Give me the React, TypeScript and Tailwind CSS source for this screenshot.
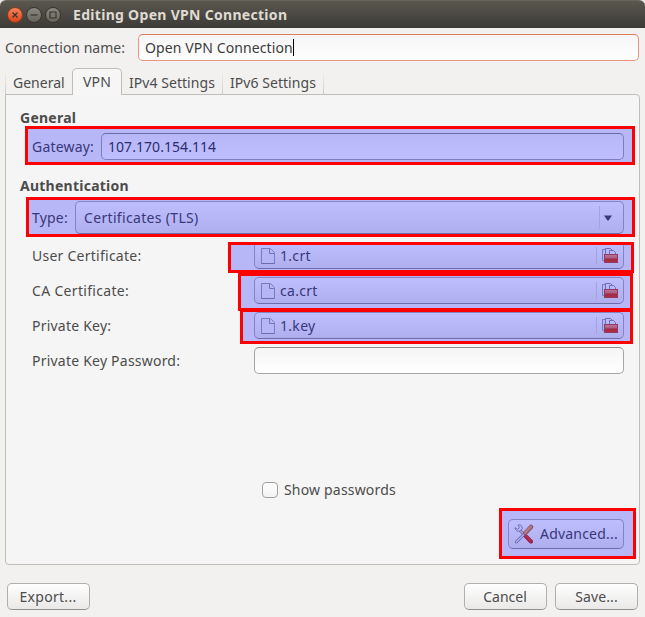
import type { ReactNode } from "react";

const FIELD =
  "border border-[#a9a6a2] border-t-[#918f8b] rounded-[5px] bg-linear-to-b from-[#f5f5f5] to-white";
const BUTTON =
  "border border-[#b2afab] border-b-[#93918e] rounded-[5px] bg-linear-to-b from-[#fefefe] to-[#eae9e8]";

function Highlight({ className }: { className: string }) {
  return (
    <div
      className={`absolute border-[3px] border-[#ff0000] bg-[#0000ff]/25 bg-clip-padding pointer-events-none ${className}`}
    />
  );
}

function PageIcon() {
  return (
    <svg width="14" height="16" viewBox="0 0 14 16" fill="none" className="shrink-0">
      <path d="M.5.5h9l4 4v11H.5z" fill="#f3f3f5" stroke="#a3a3aa" />
      <path d="M.5 15.500h13" stroke="#8f8f98" />
      <path d="M8.500 1v4.500H13" stroke="#9a9aa2" />
    </svg>
  );
}

function FolderIcon() {
  return (
    <svg width="16" height="16" viewBox="0 0 16 16" fill="none" className="shrink-0">
      <defs>
        <linearGradient id="folder" x1="0" y1="0" x2="0" y2="1">
          <stop offset="0" stopColor="#f0a080" />
          <stop offset=".45" stopColor="#e67a50" />
          <stop offset=".55" stopColor="#d83a08" />
          <stop offset="1" stopColor="#e83c0c" />
        </linearGradient>
      </defs>
      <path d="M.5 12.500v-11h4v11z" fill="#eeeef2" stroke="#a2a2ac" />
      <path d="M3.500 9.500V.5h5l2 2v7z" fill="#f4f4f8" stroke="#9393a0" />
      <path d="M7.500 7.500v-5h4l2 2v3z" fill="#f4f4f8" stroke="#9393a0" />
      <rect x="2.500" y="6.500" width="13" height="8" fill="url(#folder)" stroke="#c84c28" />
    </svg>
  );
}

function ToolsIcon() {
  return (
    <svg width="20" height="20" viewBox="0 0 20 20" fill="none" className="shrink-0">
      <path d="M6 6.500l6 6" stroke="#83838c" strokeWidth="2.800" />
      <path d="M6 6.500l6 6" stroke="#e4e4ea" strokeWidth="1.300" />
      <path d="M11.700 12.200l5.300 5.300" stroke="#c42408" strokeWidth="4" strokeLinecap="round" />
      <path d="M12 12l5 5" stroke="#f04010" strokeWidth="2.200" strokeLinecap="round" />
      <path
        d="M1 3.700l2.600 1.500 1.800-1.500L4 .9c2.700-.5 4.600 1.200 4.300 3.700L6.100 7.300C3.400 7.700 1 6.300 1 3.700z"
        fill="#f0f0f4"
        stroke="#8c8c96"
        strokeWidth=".9"
      />
      <path d="M10.300 10L2.300 18" stroke="#7c7c86" strokeWidth="2.800" strokeLinecap="round" />
      <path d="M10.300 10L2.300 18" stroke="#efeff4" strokeWidth="1.300" strokeLinecap="round" />
      <path d="M11.300 8.900l5.700-6" stroke="#bd7030" strokeWidth="4.400" strokeLinecap="round" />
      <path d="M11.300 8.500l5.500-5.700" stroke="#eda060" strokeWidth="2.600" strokeLinecap="round" />
    </svg>
  );
}

function WindowButton({ close, children }: { close?: boolean; children: ReactNode }) {
  return (
    <span
      className={`flex size-4 items-center justify-center rounded-full border ${
        close
          ? "border-[#8c3a1c] bg-linear-to-b from-[#f58258] to-[#dc4415]"
          : "border-[#35342f] bg-linear-to-b from-[#8b897f] to-[#66645c]"
      }`}
    >
      <svg width="14" height="14" viewBox="0 0 14 14" fill="none" stroke="#35322c" strokeWidth="1.100" className="shrink-0">
        {children}
      </svg>
    </span>
  );
}

function FileRow({ label, file, tracking, highlight }: { label: string; file: string; tracking: string; highlight: string }) {
  return (
    <div className="flex h-[27px] items-center">
      <span className={`w-[222px] shrink-0 ${tracking}`}>{label}</span>
      <div className={`relative flex h-[27px] w-[370px] items-center pr-[5px] pl-[6px] ${BUTTON}`}>
        <PageIcon />
        <span className="ml-[5px] flex-1 tracking-[0.3px]">{file}</span>
        <span className="mr-[5px] h-[17px] w-px bg-[#dad8d5]" />
        <FolderIcon />
        <Highlight className={highlight} />
      </div>
    </div>
  );
}

function Separator() {
  return <span className="h-[24px] w-px self-end bg-linear-to-b from-transparent to-[#cbc9c6]" />;
}

export default function App() {
  return (
    <div className="h-[617px] w-[645px] bg-[#e6e5e4] font-['Noto_Sans',sans-serif] text-[14px] leading-[19px] whitespace-nowrap text-[#4c4c4c]">
      <div className="flex h-full flex-col rounded-t-[6px] bg-[#f2f1f0]">
        <header className="flex h-7 shrink-0 items-center rounded-t-[6px] border-t border-[#67645b] bg-linear-to-b from-[#5a574e] to-[#3c3b37] pl-[7px]">
          <div className="flex gap-[3px]">
            <WindowButton close>
              <path d="M4.500 4.500l5 5M9.500 4.500l-5 5" />
            </WindowButton>
            <WindowButton>
              <path d="M3.500 7h7" />
            </WindowButton>
            <WindowButton>
              <path d="M4 4h6v6H4z" />
            </WindowButton>
          </div>
          <h1 className="ml-[12px] font-bold tracking-[0.3px] text-[#dfdbd2]">Editing Open VPN Connection</h1>
        </header>

        <div className="mt-[6px] flex h-[27px] shrink-0 items-center pl-[5px]">
          <label className="w-[133px]">Connection name:</label>
          <div className="flex h-[27px] w-[501px] items-center rounded-[5px] border border-[#e9967a] border-t-[#dd7f5b] bg-linear-to-b from-[#f5f5f5] to-white pl-[6px] text-[#3c3c3c]">
            <span className="tracking-[0.1px]">Open VPN Connection</span>
            <span className="h-[17px] w-px bg-black" />
          </div>
        </div>

        <nav className="z-10 ml-[5px] flex h-[34px] shrink-0 items-end">
          <Separator />
          <span className="mb-[3px] w-[66px] pl-[7px]">General</span>
          <span className="h-[27px] w-[50px] rounded-t-[5px] border border-b-0 border-[#c0bdb9] bg-[#f6f6f6] pt-[3px] text-center tracking-[0.2px]">
            VPN
          </span>
          <span className="mb-[3px] w-[100px] pl-[7px] tracking-[0.05px]">IPv4 Settings</span>
          <Separator />
          <span className="mb-[3px] w-[100px] pl-[7px] tracking-[0.05px]">IPv6 Settings</span>
          <Separator />
        </nav>

        <main className="-mt-px ml-[5px] flex h-[471px] w-[635px] shrink-0 flex-col rounded-[4px] rounded-tl-none border border-[#c0bdb9] bg-[#f5f5f5] pt-[13px] pr-[15px] pl-[14px]">
          <h2 className="font-bold tracking-[0.25px]">General</h2>
          <div className="relative mt-[6px] ml-3 flex h-[27px] shrink-0 items-center">
            <span className="w-[69px] tracking-[0.2px]">Gateway:</span>
            <div className={`flex h-full flex-1 items-center pl-[6px] tracking-[0.05px] text-[#3c3c3c] ${FIELD}`}>107.170.154.114</div>
            <Highlight className="-top-[7px] -right-[11px] -bottom-[5px] -left-[7px]" />
          </div>

          <h2 className="mt-4 font-bold tracking-[0.25px]">Authentication</h2>
          <div className="relative mt-[6px] ml-3 flex h-[33px] shrink-0 items-center">
            <span className="w-[43px] tracking-[0.2px]">Type:</span>
            <div className={`flex h-full flex-1 items-center pr-[11px] pl-[8px] ${BUTTON}`}>
              <span className="flex-1 tracking-[0.33px]">Certificates (TLS)</span>
              <span className="mr-[4px] h-[23px] w-px bg-[#dad8d5]" />
              <svg width="8" height="6" viewBox="0 0 8 6">
                <path d="M0 .5h8L4.500 5.500h-1z" fill="#4c4c4c" />
              </svg>
            </div>
            <Highlight className="-top-[4px] -right-[11px] -bottom-[3px] -left-[6px]" />
          </div>

          <div className="mt-2 ml-3 flex shrink-0 flex-col gap-2">
            <FileRow label="User Certificate:" file="1.crt" tracking="tracking-[0.25px]" highlight="-top-px -right-[11px] -bottom-[5px] -left-[27px]" />
            <FileRow label="CA Certificate:" file="ca.crt" tracking="tracking-[0.32px]" highlight="-top-[5px] -right-[10px] -bottom-[8px] -left-[17px]" />
            <FileRow label="Private Key:" file="1.key" tracking="tracking-[0.22px]" highlight="-top-[4px] -right-[10px] -bottom-[6px] -left-[15px]" />
            <div className="flex h-[27px] items-center">
              <span className="w-[222px] tracking-[0.22px]">Private Key Password:</span>
              <div className={`h-full flex-1 ${FIELD}`} />
            </div>
          </div>

          <label className="mt-[108px] ml-[242px] flex h-4 shrink-0 items-center tracking-[0.18px]">
            <span className="mr-[6px] size-4 rounded-[4px] border border-[#a4a19d] bg-linear-to-b from-white to-[#f3f3f3]" />
            <span className="pb-[2px]">Show passwords</span>
          </label>

          <div className={`relative mt-[21px] flex h-[30px] w-[116px] shrink-0 items-center self-end pl-[5px] ${BUTTON}`}>
            <ToolsIcon />
            <span className="ml-[6px] pb-[2px] tracking-[0.2px]">Advanced...</span>
            <Highlight className="-top-[12px] -right-[13px] -bottom-[11px] -left-[10px]" />
          </div>
        </main>

        <footer className="mt-[18px] flex h-[27px] shrink-0 gap-2 pr-[7px] pl-[7px]">
          <button className={`mr-auto w-[83px] pr-px tracking-[0.3px] ${BUTTON}`}>Export...</button>
          <button className={`w-[83px] pr-px ${BUTTON}`}>Cancel</button>
          <button className={`w-[83px] tracking-[0.1px] ${BUTTON}`}>Save...</button>
        </footer>
      </div>
    </div>
  );
}
